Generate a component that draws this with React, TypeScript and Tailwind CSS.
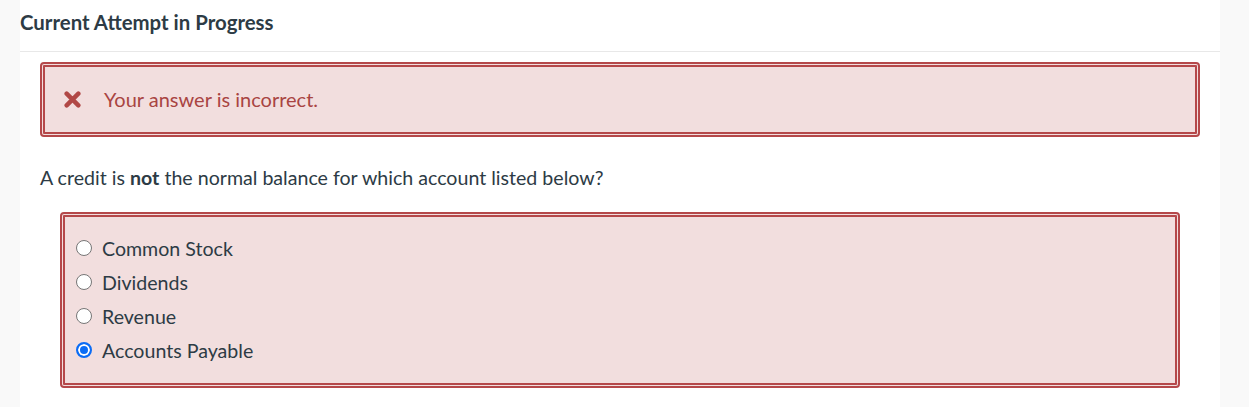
const options = ['Common Stock', 'Dividends', 'Revenue', 'Accounts Payable'];

function CrossIcon() {
  return (
    <svg viewBox="0 0 16 16" className="w-[17px] h-[17px]" aria-hidden="true">
      <path d="M2.5 2.5 L13.5 13.5 M13.5 2.5 L2.5 13.5" stroke="#b14846" strokeWidth="4.2" strokeLinecap="round" fill="none" />
    </svg>
  );
}

export default function App() {
  return (
    <div className="min-h-[407px] bg-[#f9f9f9] font-['Lato',sans-serif] text-[#2d3b45]">
      <div className="ml-5 w-[1200px] min-h-[407px] bg-white">
        {/* Header */}
        <div className="h-[52px] border-b border-[#e8e8e8] pt-[9px]">
          <h2 className="text-[20.4px] leading-[27px] font-bold">Current Attempt in Progress</h2>
        </div>

        <div className="px-5 pt-[10px]">
          {/* Incorrect alert */}
          <div className="h-[75px] rounded border-[5px] border-double border-[#b5484a] bg-[#f2dede] flex items-center pl-[19px] text-[#a94442]">
            <CrossIcon />
            <span className="ml-[23px] text-[20px] leading-[27px]">Your answer is incorrect.</span>
          </div>

          {/* Question */}
          <p className="mt-[27px] text-[19.6px] leading-[27px]">
            A credit is <strong className="font-bold">not</strong> the normal balance for which account listed below?
          </p>

          {/* Answers */}
          <div className="mt-[21px] ml-5 w-[1120px] h-[176px] rounded border-[5px] border-double border-[#b5484a] bg-[#f2dede] pt-[14px] pl-[11px]">
            {options.map((o, i) => (
              <label key={o} className="flex items-center h-[34px] text-[19.6px] leading-[27px]">
                <input
                  type="radio"
                  name="answer"
                  defaultChecked={i === 3}
                  className="appearance-none shrink-0 w-[16px] h-[16px] m-0 rounded-full border border-[#767676] bg-white checked:border-2 checked:border-[#0b6cf5] checked:bg-[#0b6cf5] checked:shadow-[inset_0_0_0_2px_#ffffff]"
                />
                <span className="ml-[10px]">{o}</span>
              </label>
            ))}
          </div>
        </div>
      </div>
    </div>
  );
}
